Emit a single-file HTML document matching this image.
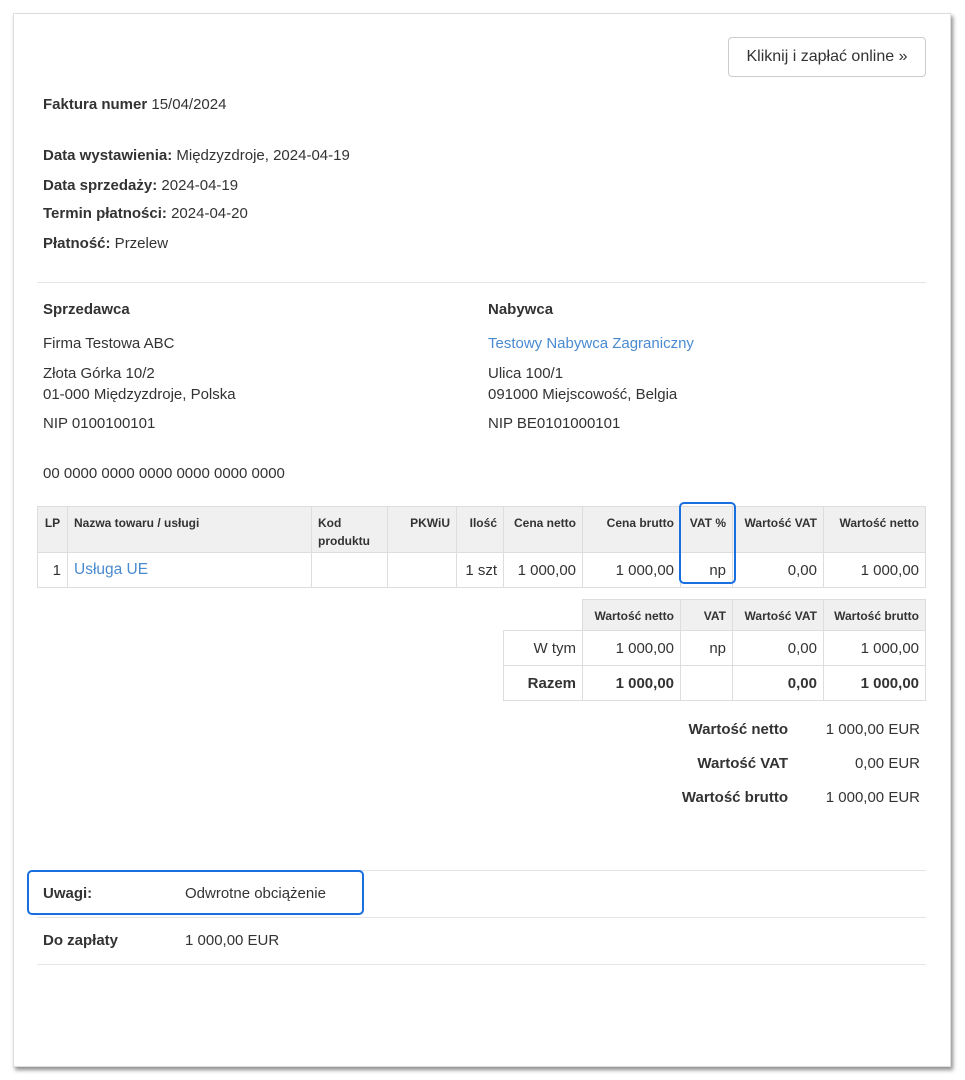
<!DOCTYPE html>
<html><head><meta charset="utf-8"><style>
*{margin:0;padding:0;box-sizing:border-box}
body{width:965px;height:1080px;background:#fff;font-family:"Liberation Sans",Arial,sans-serif;font-size:15px;color:#333;position:relative;overflow:hidden}
.card{position:absolute;left:13px;top:13px;width:938px;height:1054px;background:#fff;border:1px solid #ddd;box-shadow:2px 3px 4px rgba(0,0,0,.45)}
.a{position:absolute;white-space:nowrap}
b{font-weight:bold}
.btn{position:absolute;left:728px;top:37px;width:198px;height:40px;border:1px solid #ccc;border-radius:4px;font-size:16px;line-height:38px;text-align:center;color:#333}
.hr{position:absolute;left:37px;width:889px;height:1px;background:#e5e5e5}
table{position:absolute;border-collapse:collapse}
td,th{border:1px solid #ddd;padding:0 6px}
th{background:#f0f0f0;font-size:12px;font-weight:bold;vertical-align:top;text-align:right;padding-top:7px;line-height:18px}
td{font-size:15px;text-align:right}
.blue{color:#4a8ad0}
.hl{position:absolute;border:2px solid #1a6fe0;border-radius:5px}
</style></head><body>
<div class="card"></div>
<div class="btn">Kliknij i zapłać online »</div>
<div class="a" style="left:43px;top:96px"><b>Faktura numer</b> 15/04/2024</div>
<div class="a" style="left:43px;top:147px"><b>Data wystawienia:</b> Międzyzdroje, 2024-04-19</div>
<div class="a" style="left:43px;top:177px"><b>Data sprzedaży:</b> 2024-04-19</div>
<div class="a" style="left:43px;top:205px"><b>Termin płatności:</b> 2024-04-20</div>
<div class="a" style="left:43px;top:235px"><b>Płatność:</b> Przelew</div>
<div class="hr" style="top:282px"></div>
<div class="a" style="left:43px;top:301px"><b>Sprzedawca</b></div>
<div class="a" style="left:43px;top:335px">Firma Testowa ABC</div>
<div class="a" style="left:43px;top:365px">Złota Górka 10/2</div>
<div class="a" style="left:43px;top:386px">01-000 Międzyzdroje, Polska</div>
<div class="a" style="left:43px;top:415px">NIP 0100100101</div>
<div class="a" style="left:488px;top:301px"><b>Nabywca</b></div>
<div class="a blue" style="left:488px;top:335px">Testowy Nabywca Zagraniczny</div>
<div class="a" style="left:488px;top:365px">Ulica 100/1</div>
<div class="a" style="left:488px;top:386px">091000 Miejscowość, Belgia</div>
<div class="a" style="left:488px;top:415px">NIP BE0101000101</div>
<div class="a" style="left:43px;top:465px">00 0000 0000 0000 0000 0000 0000</div>

<table style="left:37px;top:506px;width:889px">
<tr style="height:46px">
<th style="width:30px;text-align:center">LP</th><th style="width:244px;text-align:left">Nazwa towaru / usługi</th><th style="width:76px;text-align:left">Kod<br>produktu</th><th style="width:69px">PKWiU</th><th style="width:47px">Ilość</th><th style="width:79px">Cena netto</th><th style="width:98px">Cena brutto</th><th style="width:52px">VAT %</th><th style="width:91px">Wartość VAT</th><th>Wartość netto</th></tr>
<tr style="height:35px"><td>1</td><td class="blue" style="text-align:left;font-size:15.5px">Usługa UE</td><td></td><td></td><td>1 szt</td><td>1 000,00</td><td>1 000,00</td><td>np</td><td>0,00</td><td>1 000,00</td></tr>
</table>
<div class="hl" style="left:679px;top:502px;width:57px;height:82px"></div>

<table style="left:503px;top:599px;width:423px">
<tr style="height:31px"><th style="width:79px;background:#fff;border:none;border-bottom:1px solid #ddd"></th><th style="width:98px">Wartość netto</th><th style="width:52px">VAT</th><th style="width:91px">Wartość VAT</th><th>Wartość brutto</th></tr>
<tr style="height:35px"><td>W tym</td><td>1 000,00</td><td>np</td><td>0,00</td><td>1 000,00</td></tr>
<tr style="height:35px;font-weight:bold"><td><b>Razem</b></td><td><b>1 000,00</b></td><td></td><td><b>0,00</b></td><td><b>1 000,00</b></td></tr>
</table>

<div class="a" style="right:177px;top:721px"><b>Wartość netto</b></div>
<div class="a" style="right:45px;top:721px">1 000,00 EUR</div>
<div class="a" style="right:177px;top:755px"><b>Wartość VAT</b></div>
<div class="a" style="right:45px;top:755px">0,00 EUR</div>
<div class="a" style="right:177px;top:789px"><b>Wartość brutto</b></div>
<div class="a" style="right:45px;top:789px">1 000,00 EUR</div>

<div class="hr" style="top:870px"></div>
<div class="a" style="left:43px;top:885px"><b>Uwagi:</b></div>
<div class="a" style="left:185px;top:885px">Odwrotne obciążenie</div>
<div class="hl" style="left:27px;top:870px;width:337px;height:45px"></div>
<div class="hr" style="top:917px"></div>
<div class="a" style="left:43px;top:932px"><b>Do zapłaty</b></div>
<div class="a" style="left:185px;top:932px">1 000,00 EUR</div>
<div class="hr" style="top:964px"></div>
</body></html>
